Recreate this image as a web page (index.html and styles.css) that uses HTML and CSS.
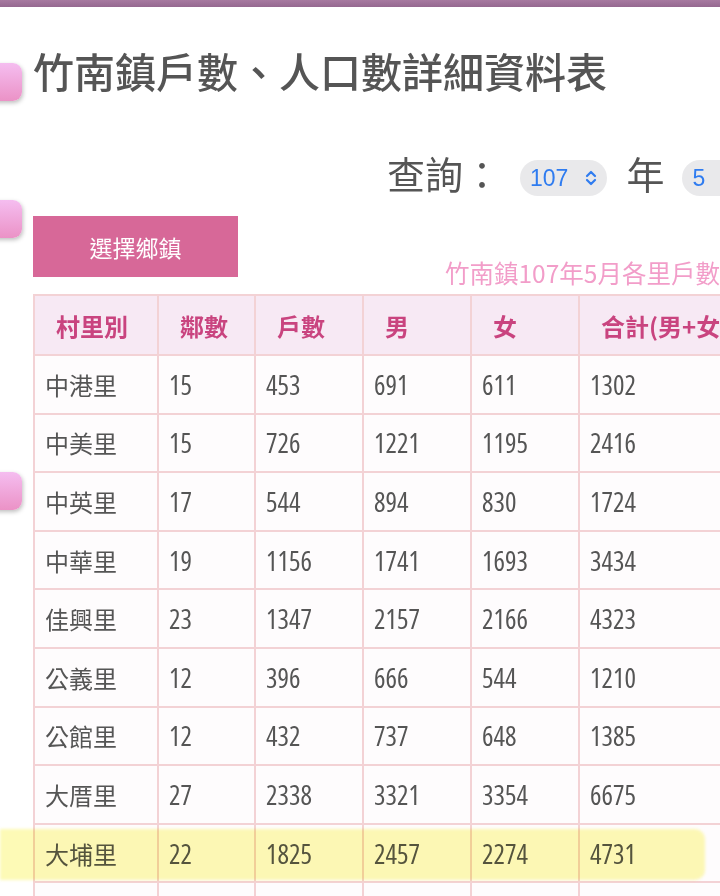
FILE: index.html
```html
<!DOCTYPE html>
<html lang="zh-Hant">
<head>
<meta charset="utf-8">
<link rel="stylesheet" href="styles.css">
</head>
<body>
<div class="topbar"></div>
<div class="tab tab-1"></div>
<div class="tab tab-2"></div>
<div class="tab tab-3"></div>
<main class="page">
  <h1 class="title">竹南鎮戶數、人口數詳細資料表</h1>
  <div class="query">
    <span class="query-label">查詢：</span>
    <span class="pill">107
      <svg class="chev" viewBox="0 0 12 16" width="12" height="16"><path d="M2 6 L6 2 L10 6 M2 10 L6 14 L10 10" fill="none" stroke="#2f7cf0" stroke-width="2.2" stroke-linecap="round" stroke-linejoin="round"/></svg>
    </span>
    <span class="query-label unit">年</span>
    <span class="pill">5
      <svg class="chev" viewBox="0 0 12 16" width="12" height="16"><path d="M2 6 L6 2 L10 6 M2 10 L6 14 L10 10" fill="none" stroke="#2f7cf0" stroke-width="2.2" stroke-linecap="round" stroke-linejoin="round"/></svg>
    </span>
    <span class="query-label unit">月</span>
  </div>
  <div class="toolbar">
    <button class="btn">選擇鄉鎮</button>
    <div class="caption">竹南鎮107年5月各里戶數、人口數統計表</div>
  </div>
  <table class="data">
    <thead>
      <tr><th class="c1">村里別</th><th class="c2">鄰數</th><th class="c3">戶數</th><th class="c4">男</th><th class="c5">女</th><th class="c6">合計(男+女)</th></tr>
    </thead>
    <tbody>
      <tr><td>中港里</td><td class="n">15</td><td class="n">453</td><td class="n">691</td><td class="n">611</td><td class="n">1302</td></tr>
      <tr><td>中美里</td><td class="n">15</td><td class="n">726</td><td class="n">1221</td><td class="n">1195</td><td class="n">2416</td></tr>
      <tr><td>中英里</td><td class="n">17</td><td class="n">544</td><td class="n">894</td><td class="n">830</td><td class="n">1724</td></tr>
      <tr><td>中華里</td><td class="n">19</td><td class="n">1156</td><td class="n">1741</td><td class="n">1693</td><td class="n">3434</td></tr>
      <tr><td>佳興里</td><td class="n">23</td><td class="n">1347</td><td class="n">2157</td><td class="n">2166</td><td class="n">4323</td></tr>
      <tr><td>公義里</td><td class="n">12</td><td class="n">396</td><td class="n">666</td><td class="n">544</td><td class="n">1210</td></tr>
      <tr><td>公館里</td><td class="n">12</td><td class="n">432</td><td class="n">737</td><td class="n">648</td><td class="n">1385</td></tr>
      <tr><td>大厝里</td><td class="n">27</td><td class="n">2338</td><td class="n">3321</td><td class="n">3354</td><td class="n">6675</td></tr>
      <tr class="marked"><td>大埔里</td><td class="n">22</td><td class="n">1825</td><td class="n">2457</td><td class="n">2274</td><td class="n">4731</td></tr>
      <tr><td>山佳里</td><td class="n">18</td><td class="n">1102</td><td class="n">1563</td><td class="n">1498</td><td class="n">3061</td></tr>
    </tbody>
  </table>
</main>
<div class="highlight"></div>
</body>
</html>
```

FILE: styles.css
```css
html, body {
  margin: 0;
  padding: 0;
  background: #ffffff;
  overflow: hidden;
  width: 720px;
  height: 896px;
}
body {
  position: relative;
  font-family: "Noto Sans CJK TC", "Noto Sans", sans-serif;
  color: #555555;
}
.topbar {
  height: 7px;
  background: linear-gradient(#a77aa0, #956890);
}
.tab {
  position: absolute;
  left: -12px;
  width: 34px;
  height: 38px;
  border-radius: 9px;
  background: linear-gradient(#f5bdf0, #eb92c6);
  box-shadow: 1px 2px 4px rgba(0, 0, 0, 0.25);
}
.tab-1 { top: 63px; }
.tab-2 { top: 200px; }
.tab-3 { top: 472px; }

.page {
  width: 900px;
  padding-left: 33px;
}
.title {
  margin: 38px 0 0 0;
  font-size: 41px;
  line-height: 50px;
  font-weight: 500;
  color: #555555;
  letter-spacing: 0;
}
.query {
  display: flex;
  align-items: center;
  margin-top: 58px;
  padding-left: 354px;
  height: 40px;
}
.query-label {
  font-size: 38px;
  line-height: 40px;
  color: #555555;
}
.unit {
  margin-left: 19px;
  margin-right: 18px;
}
.pill {
  display: inline-flex;
  align-items: center;
  height: 36px;
  padding: 0 10px 0 10px;
  margin-left: 19px;
  margin-top: 10px;
  border-radius: 18px;
  background: #e9e9eb;
  color: #2f7cf0;
  font-family: "Liberation Sans", sans-serif;
  font-size: 23px;
  gap: 17px;
}
.query-label.unit + .pill { margin-left: 0; }
.chev { display: block; }

.toolbar {
  display: flex;
  align-items: flex-end;
  margin-top: 23px;
}
.btn {
  width: 205px;
  height: 61px;
  margin-bottom: 17px;
  border: none;
  background: #d76898;
  color: #ffffff;
  font-family: "Noto Sans CJK TC", sans-serif;
  font-size: 23px;
  padding: 0;
}
.caption {
  margin-left: 207px;
  margin-bottom: 6px;
  font-size: 24.5px;
  line-height: 30px;
  color: #f29dc9;
  white-space: nowrap;
}

.data {
  border-collapse: collapse;
  table-layout: fixed;
  width: 800px;
}
.data th, .data td {
  border: 2px solid #f3d2d5;
  text-align: left;
  white-space: nowrap;
}
.data th {
  height: 58px;
  padding: 0 0 0 21px;
  background: #f7e9f4;
  color: #c9447f;
  font-size: 24px;
  font-weight: 700;
}
.data td {
  height: 56.6px;
  padding: 0 0 0 10px;
  background: #fefcfd;
  color: #555555;
  font-size: 24px;
}
.data td.n {
  font-family: "Open Sans", "DejaVu Sans Condensed", sans-serif;
  font-stretch: 75%;
  font-size: 27px;
}
.c1 { width: 101px; }
.c2 { width: 74px; }
.c3 { width: 85px; }
.c4 { width: 85px; }
.c5 { width: 85px; }
.c6 { width: 250px; }

.highlight {
  position: absolute;
  left: 0;
  top: 829px;
  width: 705px;
  height: 51px;
  background: rgba(250, 244, 80, 0.42);
  mix-blend-mode: multiply;
  border-radius: 0 10px 10px 0;
  filter: blur(1.5px);
}
```
